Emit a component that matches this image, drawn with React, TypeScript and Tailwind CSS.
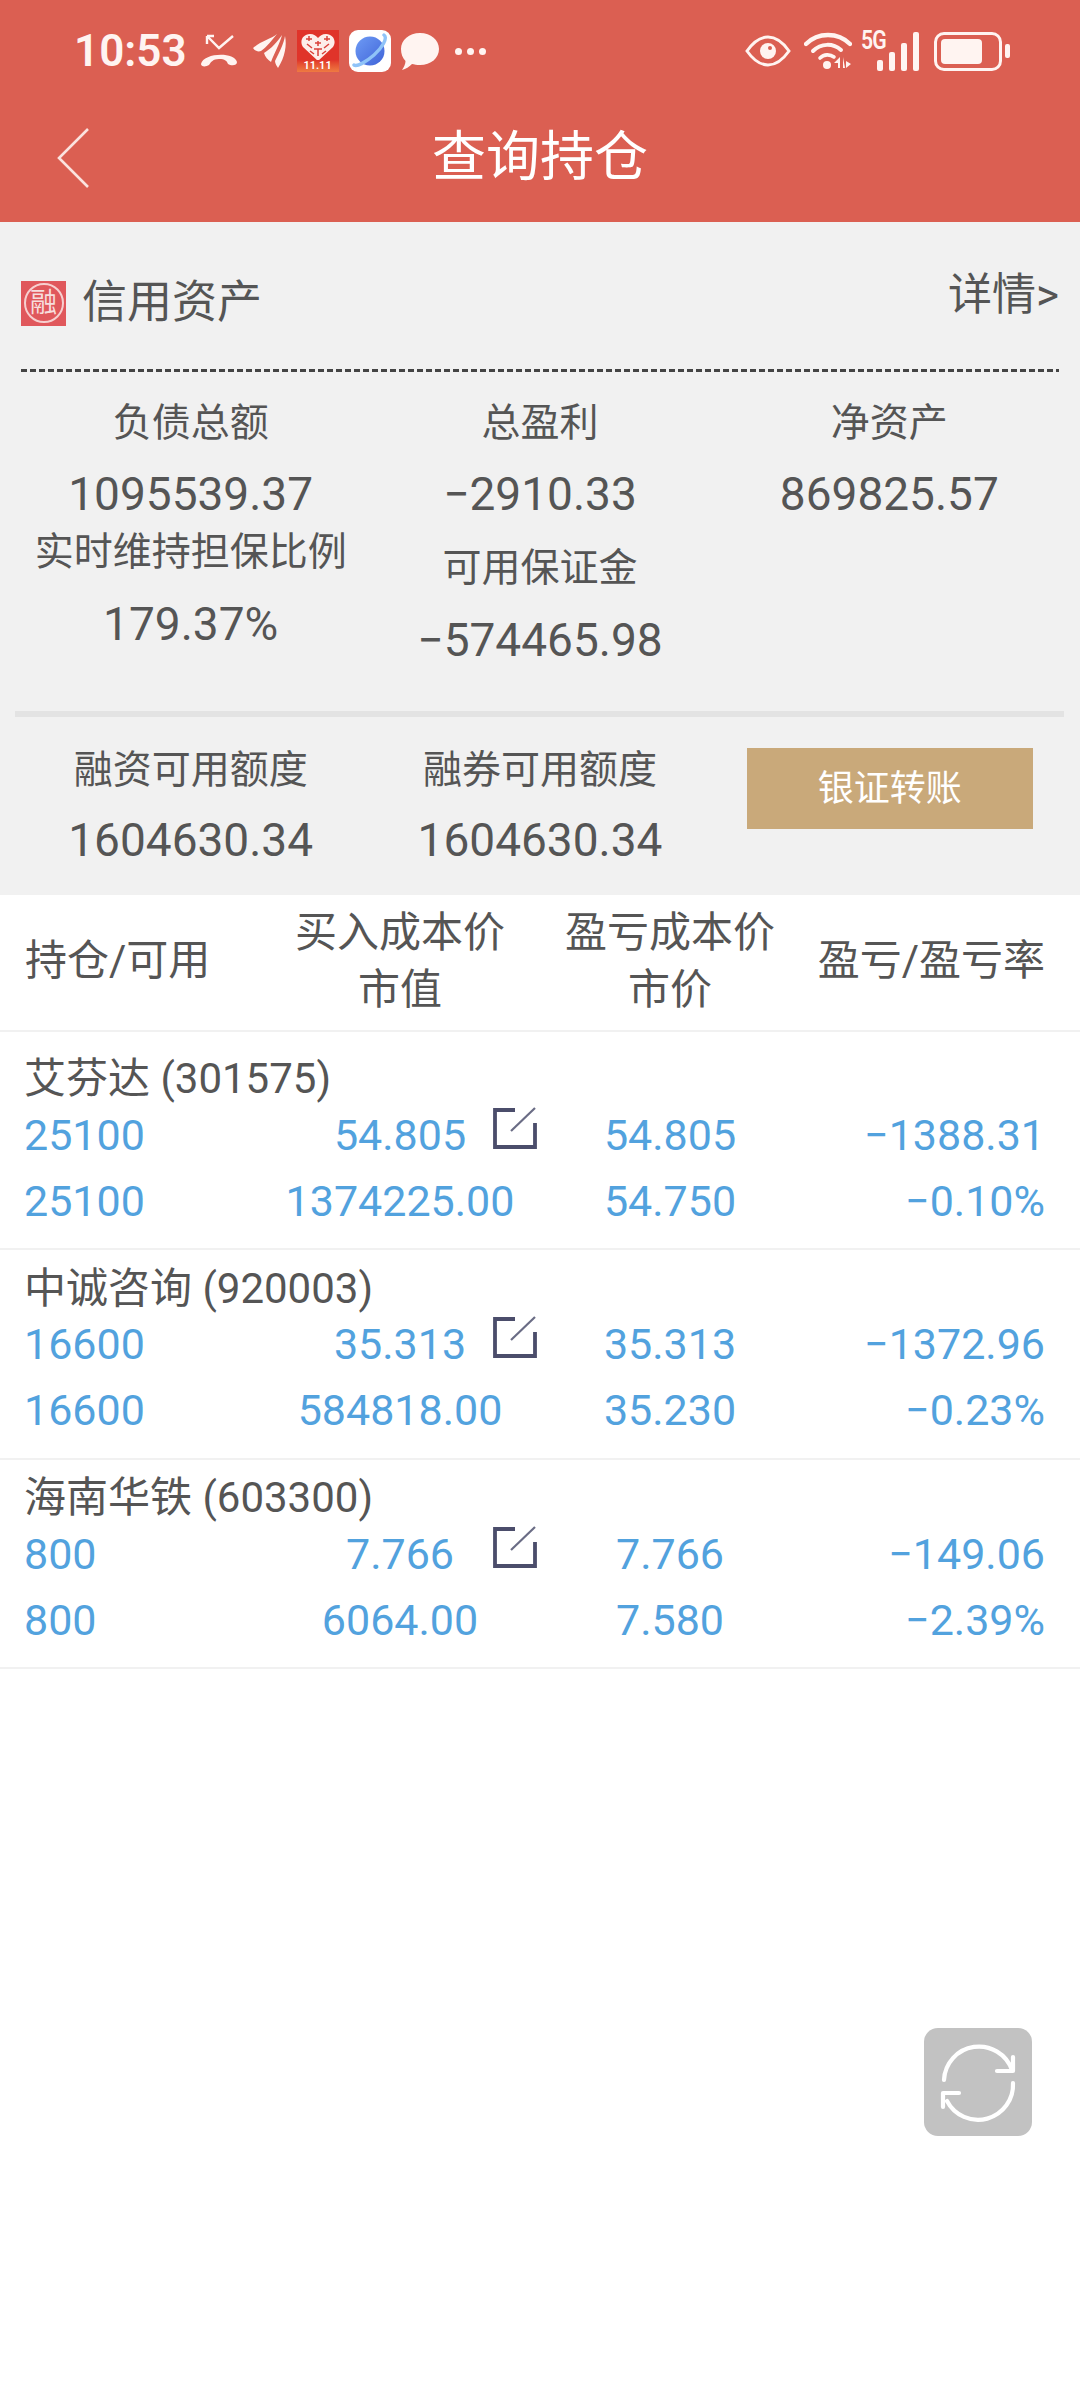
const positions = [
  {
    name: "艾芬达 (301575)",
    hold: "25100",
    avail: "25100",
    cost: "54.805",
    value: "1374225.00",
    plCost: "54.805",
    price: "54.750",
    pl: "−1388.31",
    rate: "−0.10%",
  },
  {
    name: "中诚咨询 (920003)",
    hold: "16600",
    avail: "16600",
    cost: "35.313",
    value: "584818.00",
    plCost: "35.313",
    price: "35.230",
    pl: "−1372.96",
    rate: "−0.23%",
  },
  {
    name: "海南华铁 (603300)",
    hold: "800",
    avail: "800",
    cost: "7.766",
    value: "6064.00",
    plCost: "7.766",
    price: "7.580",
    pl: "−149.06",
    rate: "−2.39%",
  },
];

const StatusBar = () => {
  return (
    <div className="flex h-[100px] items-center justify-between pl-[74px] pr-[70px] pt-[2px]">
      <div className="flex items-center">
        <span className="text-[44px] font-semibold leading-none text-[#fff4f1]">10:53</span>
        {/* missed call */}
        <svg className="ml-[13px]" width="38" height="36" viewBox="0 0 38 36">
          <path d="M7 3 L19 15 L33 3 M7 3 V11 M7 3 H14" fill="none" stroke="#fff4f1" strokeWidth="2.4" />
          <path d="M1 31 C3 20 34 18 37 29 C37 33 31 33 28 31 C27 28 25 26 19 26 C13 26 11 29 9 32 C6 34 1 34 1 31 Z" fill="#fff4f1" />
        </svg>
        {/* feather */}
        <svg className="ml-[15px]" width="34" height="36" viewBox="0 0 34 36">
          <path d="M0 15 C8 8 18 6 24 1 C20 6 13 15 8 18 C5 19 2 18 0 15 Z" fill="#fff4f1" />
          <path d="M11 20 C18 16 25 8 29 2 C27 10 21 21 18 29 C15 27 12 24 11 20 Z" fill="#fff4f1" />
          <path d="M22 28 C26 20 31 10 32 3 C34 12 32 24 25 35 C24 33 22 31 22 28 Z" fill="#fff4f1" />
        </svg>
        <PddIcon />
        {/* browser */}
        <div className="ml-[10px] flex h-[42px] w-[42px] items-center justify-center rounded-[9px] bg-white">
          <svg width="36" height="36" viewBox="0 0 36 36">
            <defs>
              <linearGradient id="planet" x1="0" y1="0" x2="1" y2="1">
                <stop offset="0" stopColor="#6e9bf5" />
                <stop offset="1" stopColor="#3f63d8" />
              </linearGradient>
            </defs>
            <circle cx="18" cy="18" r="14.5" fill="url(#planet)" />
            <path d="M32 2 C36 5 30 15 22 22 C14 29 5 34 2 32" fill="none" stroke="#8fc3f8" strokeWidth="3.4" strokeLinecap="round" />
          </svg>
        </div>
        {/* message */}
        <svg className="ml-[9px]" width="40" height="42" viewBox="0 0 40 42">
          <path d="M20 3 C31 3 39 10 39 19 C39 28 31 35 20 35 C17 35 14 34.5 12 34 C9 37 6 39 2 40 C4 37 5.5 34 5.5 31 C2.5 28 1 24 1 19 C1 10 9 3 20 3 Z" fill="#fff4f1" />
        </svg>
        <div className="ml-[15px] flex gap-[5px]">
          <span className="h-[7px] w-[7px] rounded-full bg-[#fff4f1]" />
          <span className="h-[7px] w-[7px] rounded-full bg-[#fff4f1]" />
          <span className="h-[7px] w-[7px] rounded-full bg-[#fff4f1]" />
        </div>
      </div>
      <div className="flex items-center">
        <svg width="46" height="32" viewBox="0 0 46 32">
          <path d="M2 16 C9 6 16 2 23 2 C30 2 37 6 44 16 C37 26 30 30 23 30 C16 30 9 26 2 16 Z" fill="none" stroke="#fff4f1" strokeWidth="3" />
          <circle cx="23" cy="16" r="8" fill="#fff4f1" />
          <circle cx="25" cy="13" r="2" fill="#db5f52" />
        </svg>
        <svg className="ml-[13px]" width="48" height="40" viewBox="0 0 48 40">
          <path d="M2 13 C14 1 34 1 46 13" fill="none" stroke="#fff4f1" strokeWidth="4.4" strokeLinecap="round" />
          <path d="M9 20 C17 12 29 12 37 19" fill="none" stroke="#fff4f1" strokeWidth="4" strokeLinecap="round" />
          <path d="M16 27 C20 23 26 23 30 26" fill="none" stroke="#fff4f1" strokeWidth="3.6" strokeLinecap="round" />
          <circle cx="23" cy="34" r="4" fill="#fff4f1" />
          <path d="M36 26 V37 H34 V32 H30 Z M39 26 L39 37 H41 Z M42 30 L47 33 L42 37 Z" fill="#fff4f1" />
        </svg>
        <div className="relative ml-[9px] flex h-[40px] w-[58px] items-end justify-end gap-[6px]">
          <span className="absolute left-0 top-[-3px] origin-left scale-x-[0.85] text-[25px] font-semibold leading-none tracking-[-1px] text-[#fff4f1]">5G</span>
          <span className="h-[11px] w-[6px] rounded-[2px] bg-[#fff4f1]" />
          <span className="h-[19px] w-[6px] rounded-[2px] bg-[#fff4f1]" />
          <span className="h-[28px] w-[6px] rounded-[2px] bg-[#fff4f1]" />
          <span className="h-[39px] w-[6px] rounded-[2px] bg-[#fff4f1]" />
        </div>
        <div className="ml-[15px] flex items-center gap-[3px]">
          <div className="flex h-[39px] w-[68px] items-center rounded-[10px] border-[3px] border-[#fff4f1] px-[4px]">
            <div className="h-[25px] w-[41px] rounded-[4px] bg-[#fff4f1]" />
          </div>
          <div className="h-[14px] w-[5px] rounded-[2px] bg-[#fff4f1]" />
        </div>
      </div>
    </div>
  );
};

const PddIcon = () => {
  return (
    <div className="relative ml-[10px] flex h-[42px] w-[42px] flex-col items-center overflow-hidden bg-[#e0342a]">
      <svg className="mt-[3px]" width="34" height="28" viewBox="0 0 34 28">
        <path d="M17 28 L2 14 C-2 8 2 1 9 1 C13 1 15 3 17 5 C19 3 21 1 25 1 C32 1 36 8 32 14 Z" fill="#fdeeea" />
        <path d="M8 3 V8 M5 6 H11 M6 11 L11 15 M26 3 V8 M23 6 H29 M28 11 L23 15 M17 8 V13 M14 10 H20 M13 16 H21 M17 16 V23 M9 18 L13 21 M25 18 L21 21" stroke="#d9423a" strokeWidth="1.5" fill="none" />
      </svg>
      <span className="absolute bottom-0 left-0 w-full bg-gradient-to-b from-[#e0342a] to-[#ee7a42] text-center text-[11px] font-semibold leading-[12px] text-white">11.11</span>
    </div>
  );
};

const Stat = ({ label, value, className = "" }: { label: string; value: string; className?: string }) => {
  return (
    <div className={`flex flex-col items-center gap-[12px] ${className}`}>
      <div className="text-[39px] leading-[60px]">{label}</div>
      <div className="text-[46px] leading-[60px]">{value}</div>
    </div>
  );
};

const Position = ({ item }: { item: (typeof positions)[number] }) => {
  return (
    <div className="border-b-2 border-[#f1f1f1] pb-[14.5px] pl-[24px] pr-[25px] pt-[16.5px] first:pt-[25px]">
      <div className="text-[42px] leading-[44.5px] text-[#555555]">{item.name}</div>
      <div className="grid grid-cols-[241px_270px_270px_240px] text-[43px] leading-[66px] text-[#52a2de]">
        <div>
          <div>{item.hold}</div>
          <div>{item.avail}</div>
        </div>
        <div className="relative text-center">
          <div>{item.cost}</div>
          <div>{item.value}</div>
          <svg className="absolute left-[228px] top-[5px]" width="44" height="42" viewBox="0 0 44 42">
            <path d="M22 3 H2 V40 H42 V16" fill="none" stroke="#4b4d6b" strokeWidth="3.8" />
            <path d="M18 24 L42 1" fill="none" stroke="#6a6c85" strokeWidth="2.2" />
          </svg>
        </div>
        <div className="text-center">
          <div>{item.plCost}</div>
          <div>{item.price}</div>
        </div>
        <div className="text-right">
          <div>{item.pl}</div>
          <div>{item.rate}</div>
        </div>
      </div>
    </div>
  );
};

export default function App() {
  return (
    <div className="relative h-[2400px] w-[1080px] overflow-hidden bg-white font-['Roboto','Noto_Sans_CJK_SC',sans-serif] text-[#555555]">
      <div className="h-[222px] bg-[#db5f52]">
        <StatusBar />
        <div className="grid h-[122px] grid-cols-[1fr_auto_1fr] items-center pb-[6px]">
          <svg className="ml-[57px]" width="33" height="62" viewBox="0 0 33 62">
            <path d="M31 2 L2 31 L31 60" fill="none" stroke="#fbe3df" strokeWidth="2.6" />
          </svg>
          <div className="text-[54px] leading-none text-white">查询持仓</div>
          <div />
        </div>
      </div>

      <div className="h-[673px] bg-[#f1f1f1]">
        <div className="flex h-[147px] items-start justify-between px-[21px]">
          <div className="mt-[58px] flex items-center gap-[16px]">
            <div className="flex h-[45px] w-[45px] items-center justify-center bg-[#e0585c]">
              <div className="flex h-[40px] w-[40px] items-center justify-center rounded-full border-2 border-[#f7cfcf] text-[27px] leading-none text-[#f7dddd]">融</div>
            </div>
            <div className="text-[45px] leading-[46px]">信用资产</div>
          </div>
          <div className="mt-[50px] text-[44px] leading-[46px]">详情&gt;</div>
        </div>
        <div className="mx-[21px] h-[3px] bg-[repeating-linear-gradient(90deg,#444444_0_6px,transparent_6px_9px)]" />

        <div className="grid grid-cols-3 px-[16px] pt-[21px]">
          <Stat className="!gap-[11px]" label="负债总额" value="1095539.37" />
          <Stat className="!gap-[11px]" label="总盈利" value="−2910.33" />
          <Stat className="!gap-[11px]" label="净资产" value="869825.57" />
          <Stat className="-mt-[2px]" label="实时维持担保比例" value="179.37%" />
          <Stat className="mt-[14px]" label="可用保证金" value="−574465.98" />
        </div>

        <div className="ml-[15px] mr-[16px] mt-[41px] h-[6px] bg-[#e3e3e3]" />

        <div className="grid grid-cols-3 px-[16px] pt-[23px]">
          <Stat className="!gap-[10px]" label="融资可用额度" value="1604630.34" />
          <Stat className="!gap-[10px]" label="融券可用额度" value="1604630.34" />
          <button className="ml-[32px] mt-[8px] h-[81px] w-[286px] bg-[#c9a97a] text-[36px] text-white">银证转账</button>
        </div>
      </div>

      <div className="grid h-[137px] grid-cols-[240px_270px_270px_240px] items-center border-b-2 border-[#f1f1f1] px-[25px] pb-[4px] text-[42px] leading-[57px]">
        <div>持仓/可用</div>
        <div className="text-center">
          买入成本价
          <br />
          市值
        </div>
        <div className="text-center">
          盈亏成本价
          <br />
          市价
        </div>
        <div className="text-right">盈亏/盈亏率</div>
      </div>

      <div>
        {positions.map((item) => (
          <Position key={item.name} item={item} />
        ))}
      </div>

      {/* floating refresh button */}
      <div className="absolute left-[924px] top-[2028px] h-[108px] w-[108px] rounded-[14px] bg-[#c2c2c2]">
        <svg width="108" height="108" viewBox="0 0 108 108">
          <path d="M20 52 A35 35 0 0 1 88 42 M89 43 H73 M89 43 V29 M89 55 A35 35 0 0 1 23 73 M19 65 H35 M19 65 V79" fill="none" stroke="#ffffff" strokeWidth="4.2" strokeLinecap="round" />
        </svg>
      </div>
    </div>
  );
}
